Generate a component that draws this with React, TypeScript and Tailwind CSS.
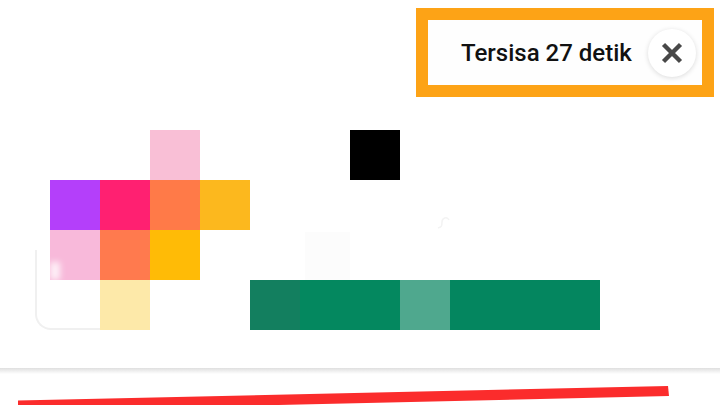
import React from 'react';

const cells = [
  { id: 'top-pink', className: 'col-start-3 row-start-1 bg-[#f9bfd6]' },
  { id: 'black', className: 'col-start-7 row-start-1 bg-black' },
  { id: 'purple', className: 'col-start-1 row-start-2 bg-[#b43ffa]' },
  { id: 'magenta', className: 'col-start-2 row-start-2 bg-[#ff2071]' },
  { id: 'orange', className: 'col-start-3 row-start-2 bg-[#ff7a48]' },
  { id: 'amber', className: 'col-start-4 row-start-2 bg-[#fcb81e]' },
  { id: 'mid-pink', className: 'col-start-1 row-start-3 bg-[#f8b9da]' },
  { id: 'mid-orange', className: 'col-start-2 row-start-3 bg-[#ff7a4e]' },
  { id: 'mid-amber', className: 'col-start-3 row-start-3 bg-[#ffbb06]' },
  { id: 'faint', className: 'col-start-6 row-start-3 mt-[2px] ml-[5px] bg-[#fcfcfc]' },
  { id: 'cream', className: 'col-start-2 row-start-4 bg-[#fde9a9]' },
  { id: 'green-dark', className: 'col-start-5 row-start-4 bg-[#137f5f]' },
  { id: 'green-wide', className: 'col-start-6 col-span-2 row-start-4 bg-[#04885f]' },
  { id: 'green-light', className: 'col-start-8 row-start-4 bg-[#4fa88e]' },
  { id: 'green-end', className: 'col-start-9 col-span-3 row-start-4 bg-[#04865f]' },
];

export default function App() {
  return (
    <div className="relative h-[405px] w-[720px] overflow-hidden bg-white font-['Roboto',sans-serif]">
      <div className="flex justify-end pt-2 pr-[6px]">
        <div className="flex h-[89px] w-[298px] items-center justify-between border-[12.5px] border-[#fda316] bg-[#fefefe] pr-[6px] pl-[33px]">
          <span className="text-[24px] leading-none font-medium text-[#111111]">Tersisa 27 detik</span>
          <button className="flex h-[48px] w-[48px] items-center justify-center rounded-full bg-white shadow-[0_1px_5px_rgba(0,0,0,0.14)]">
            <svg width="22" height="22" viewBox="0 0 22 22" fill="none">
              <path d="M2.5 2.5 19.5 19.5M19.5 2.5 2.5 19.5" stroke="#484848" strokeWidth="4.4" />
            </svg>
          </button>
        </div>
      </div>

      <div className="relative isolate mt-[33px] ml-[50px] grid w-[550px] grid-cols-[repeat(11,50px)] grid-rows-[repeat(4,50px)]">
        {/* faint rounded outline behind the cells */}
        <div className="absolute top-[120px] -left-[15px] -z-10 h-[80px] w-[70px] rounded-bl-[16px] border-b-2 border-l-2 border-[#f0f0f0]" />
        {cells.map((cell) => (
          <div key={cell.id} className={cell.className} />
        ))}
        <div className="absolute top-[132px] left-0 h-[18px] w-[10px] bg-white/80 blur-[3px]" />
        <svg className="absolute top-[82px] left-[384px]" width="18" height="20" viewBox="0 0 18 20" fill="none">
          <path d="M4 16c3-1 4-1 4-6 0-4 5-6 7-2" stroke="#f3f3f3" strokeWidth="1.5" />
        </svg>
      </div>

      <div className="mt-[38px] h-[6px] bg-gradient-to-b from-[#dfdfdf] to-white" />

      {/* red annotation stroke */}
      <svg className="absolute top-0 left-0" width="720" height="405" viewBox="0 0 720 405" fill="none">
        <polygon points="18,400.5 668,386 669,396 18,411" fill="#fb2c2c" />
      </svg>
    </div>
  );
}
